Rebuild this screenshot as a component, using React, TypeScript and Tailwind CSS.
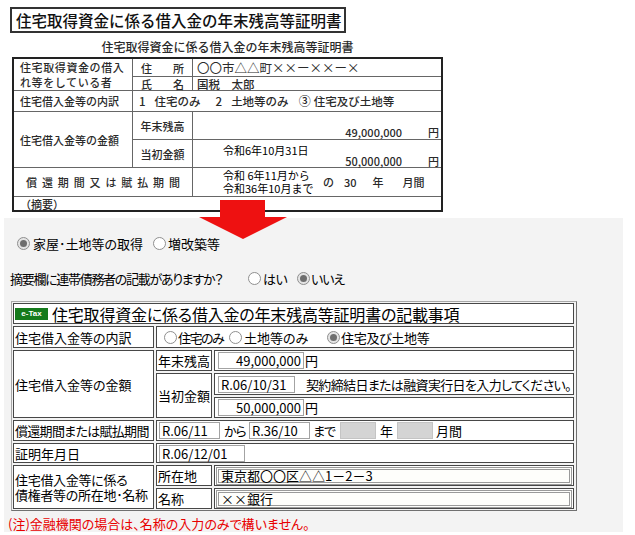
import React from "react";

const F = "font-['Noto_Sans_CJK_JP',sans-serif]";

const Radio = ({ checked }: { checked?: boolean }) => (
  <span
    className={
      "inline-flex w-[13px] h-[13px] rounded-full border border-[#8f8f8f] items-center justify-center shrink-0 " +
      (checked ? "bg-[#e4e4e4]" : "bg-white")
    }
  >
    {checked && <span className="w-[7px] h-[7px] rounded-full bg-[#6e6e6e]" />}
  </span>
);

const Box = ({
  children,
  w,
  right,
  gray,
}: {
  children?: React.ReactNode;
  w: string;
  right?: boolean;
  gray?: boolean;
}) => (
  <span
    className={
      "inline-flex items-center h-[17px] border px-[2px] text-[13px] leading-[15px] shrink-0 " +
      w +
      (right ? " justify-end" : "") +
      (gray ? " bg-[#d4d4d4] border-[#c4c4c4]" : " bg-white border-[#a3a3a3]")
    }
  >
    {children}
  </span>
);

const Cell = ({
  children,
  className = "",
}: {
  children?: React.ReactNode;
  className?: string;
}) => (
  <div className={"bg-white border border-[#474747] flex items-center min-w-0 " + className}>
    {children}
  </div>
);

function TopDoc() {
  const line = "border-[#666]";
  return (
    <div className={"bg-white h-[218px] pt-[7px] text-[#2a2a2a] " + F}>
      <div className="ml-[10px] w-[336px] h-[26px] border-2 border-[#333] flex items-center pl-[4px] text-[15.5px] leading-[18px] font-medium text-[#111] whitespace-nowrap">
        住宅取得資金に係る借入金の年末残高等証明書
      </div>
      <div className="ml-[12px] w-[431px] mt-[7px] h-[14px] text-center text-[12px] leading-[14px] font-medium whitespace-nowrap">
        住宅取得資金に係る借入金の年末残高等証明書
      </div>
      <div className="ml-[12px] mt-[3px] w-[431px] h-[155px] border-2 border-[#222] grid grid-cols-[119px_60px_248px] grid-rows-[18px_14px_21px_28px_28px_29px_13px] text-[11px] leading-[12px] font-medium whitespace-nowrap">
        <div className={"row-span-2 border-r border-b " + line + " flex flex-col justify-center pl-[6px] tracking-[0.6px] gap-[3px]"}>
          <span>住宅取得資金の借入</span>
          <span>れ等をしている者</span>
        </div>
        <div className={"border-r border-b " + line + " flex items-center justify-between px-[8px]"}>
          <span>住</span>
          <span>所</span>
        </div>
        <div className={"border-b " + line + " flex items-center pl-[4px] text-[12.5px] font-normal"}>
          〇〇市△△町××ー××ー×
        </div>
        <div className={"border-r border-b " + line + " flex items-center justify-between px-[8px]"}>
          <span>氏</span>
          <span>名</span>
        </div>
        <div className={"border-b " + line + " flex items-center pl-[4px] text-[11.5px]"}>
          国税　太郎
        </div>
        <div className={"border-r border-b " + line + " flex items-center pl-[6px]"}>
          住宅借入金等の内訳
        </div>
        <div className={"col-span-2 border-b " + line + " flex items-center pl-[6px] text-[11.5px]"}>
          <span>1</span>
          <span className="ml-[9px]">住宅のみ</span>
          <span className="ml-[15px]">2</span>
          <span className="ml-[9px]">土地等のみ</span>
          <span className="ml-[10px] text-[12px]">③</span>
          <span className="ml-[3px]">住宅及び土地等</span>
        </div>
        <div className={"row-span-2 border-r border-b " + line + " flex items-center pl-[6px]"}>
          住宅借入金等の金額
        </div>
        <div className={"border-r border-b " + line + " flex items-center justify-center"}>年末残高</div>
        <div className={"border-b " + line + " flex items-end justify-end pr-[2px] pb-[1px]"}>
          <span>49,000,000</span>
          <span className="ml-[26px]">円</span>
        </div>
        <div className={"border-r border-b " + line + " flex items-center justify-center"}>当初金額</div>
        <div className={"border-b " + line + " flex flex-col pt-[5px] leading-[11px]"}>
          <span className="pl-[30px] text-[11px] font-normal text-black">令和6年10月31日</span>
          <span className="self-end pr-[2px]">
            50,000,000<span className="ml-[26px]">円</span>
          </span>
        </div>
        <div className={"col-span-2 border-r border-b " + line + " flex items-center justify-between pl-[12px] pr-[12px]"}>
          {"償還期間又は賦払期間".split("").map((c, i) => (
            <span key={i}>{c}</span>
          ))}
        </div>
        <div className={"border-b " + line + " flex items-center"}>
          <div className="ml-[30px] w-[100px] flex flex-col text-[11px] leading-[13.5px] font-normal text-black">
            <span>令和 6年11月から</span>
            <span>令和36年10月まで</span>
          </div>
          <span>の</span>
          <span className="ml-[10px]">30</span>
          <span className="ml-[16px]">年</span>
          <span className="ml-[19px]">月間</span>
        </div>
        <div className="col-span-3 flex items-center pl-[6px]">（摘要）</div>
      </div>
    </div>
  );
}

function Panel() {
  return (
    <div
      className={
        "ml-[4px] w-[619px] h-[314px] bg-[#f3f3f3] text-[13px] leading-[15px] text-black [font-feature-settings:'palt'] " +
        F
      }
    >
      <div className="pt-[18px] pl-[13px] flex items-center h-[33px] whitespace-nowrap">
        <Radio checked />
        <span className="ml-[3px]">家屋･土地等の取得</span>
        <span className="ml-[10px] flex">
          <Radio />
        </span>
        <span className="ml-[2px]">増改築等</span>
      </div>
      <div className="mt-[20px] pl-[6px] flex items-center h-[15px] whitespace-nowrap">
        <span className="w-[238px] tracking-[-1.3px]">摘要欄に連帯債務者の記載がありますか？</span>
        <span className="flex">
          <Radio />
        </span>
        <span className="ml-[2px] w-[34px] tracking-[-0.5px]">はい</span>
        <span className="flex">
          <Radio checked />
        </span>
        <span className="ml-[1px] tracking-[-1px]">いいえ</span>
      </div>
      <div className="mt-[15px] ml-[7px] w-[566px] border border-t-[#a8a8a8] border-l-[#a8a8a8] border-r-[#707070] border-b-[#707070] pt-[1px] pl-[1px] pr-[2px] pb-[1px]">
        <div className="grid grid-cols-[141px_56px_360px] grid-rows-[21px_22px_21px_22px_21px_21px_20px_21px_21px] gap-[2px] whitespace-nowrap">
          <Cell className="col-span-3">
            <span className="ml-[1px] w-[33px] h-[12px] bg-[#157a1c] text-white text-[8px] leading-[12px] font-bold text-center [font-feature-settings:normal] font-['Liberation_Sans',sans-serif]">
              e-Tax
            </span>
            <span className="ml-[4px] text-[16px] leading-[18px] tracking-[-0.2px]">
              住宅取得資金に係る借入金の年末残高等証明書の記載事項
            </span>
          </Cell>
          <Cell className="pl-[1px]">住宅借入金等の内訳</Cell>
          <Cell className="col-span-2 pl-[7px]">
            <span className="w-[65px] flex items-center">
              <Radio />
              <span className="ml-[1px] tracking-[-1.5px]">住宅のみ</span>
            </span>
            <span className="w-[98px] flex items-center">
              <Radio />
              <span className="ml-[2px]">土地等のみ</span>
            </span>
            <span className="flex items-center">
              <Radio checked />
              <span className="ml-[1px] tracking-[-0.3px]">住宅及び土地等</span>
            </span>
          </Cell>
          <Cell className="row-span-3 pl-[1px]">住宅借入金等の金額</Cell>
          <Cell className="pl-[1px]">年末残高</Cell>
          <Cell className="pl-[3px]">
            <Box w="w-[86px]" right>
              49,000,000
            </Box>
            <span className="ml-[1px]">円</span>
          </Cell>
          <Cell className="row-span-2 pl-[1px]">当初金額</Cell>
          <Cell className="pl-[3px]">
            <Box w="w-[77px]">R.06/10/31</Box>
            <span className="ml-[11px] tracking-[-0.65px]">契約締結日または融資実行日を入力してください。</span>
          </Cell>
          <Cell className="pl-[3px]">
            <Box w="w-[86px]" right>
              50,000,000
            </Box>
            <span className="ml-[1px]">円</span>
          </Cell>
          <Cell className="pl-[1px] tracking-[-0.7px]">償還期間または賦払期間</Cell>
          <Cell className="col-span-2 pl-[2px]">
            <Box w="w-[61px]">R.06/11</Box>
            <span className="ml-[4px] w-[25px] tracking-[-1px]">から</span>
            <Box w="w-[61px]">R.36/10</Box>
            <span className="ml-[3px] w-[27px] tracking-[-1px]">まで</span>
            <Box w="w-[36px]" gray />
            <span className="ml-[4px] w-[17px]">年</span>
            <Box w="w-[36px]" gray />
            <span className="ml-[3px]">月間</span>
          </Cell>
          <Cell className="pl-[1px]">証明年月日</Cell>
          <Cell className="col-span-2 pl-[2px]">
            <Box w="w-[86px]">R.06/12/01</Box>
          </Cell>
          <Cell className="row-span-2 pl-[1px] flex-col !items-start justify-center leading-[15px] tracking-[-0.3px]">
            <span>住宅借入金等に係る</span>
            <span>債権者等の所在地･名称</span>
          </Cell>
          <Cell className="pl-[1px]">所在地</Cell>
          <Cell className="px-[1px]">
            <span className="flex-1 h-[18px] border-[3px] border-double border-[#9a9a9a] bg-[#fefefb] flex items-center pl-[2px] leading-[12px]">
              東京都〇〇区△△1－2－3
            </span>
          </Cell>
          <Cell className="pl-[1px]">名称</Cell>
          <Cell className="px-[1px]">
            <span className="flex-1 h-[18px] border-[3px] border-double border-[#9a9a9a] bg-[#fefefb] flex items-center pl-[2px] leading-[12px]">
              ××銀行
            </span>
          </Cell>
        </div>
      </div>
      <div className="mt-[5px] ml-[4px] text-[#e80000] whitespace-nowrap">
        (注)金融機関の場合は、名称の入力のみで構いません。
      </div>
    </div>
  );
}

export default function App() {
  return (
    <div className="relative w-[635px] h-[535px] bg-white overflow-hidden">
      <TopDoc />
      <Panel />
      <svg
        className="absolute left-[199px] top-[200px]"
        width="88"
        height="40"
        viewBox="0 0 88 40"
      >
        <polygon points="21,0 66,0 66,17 88,17 44,39 0,17 21,17" fill="#ee1111" />
      </svg>
    </div>
  );
}
